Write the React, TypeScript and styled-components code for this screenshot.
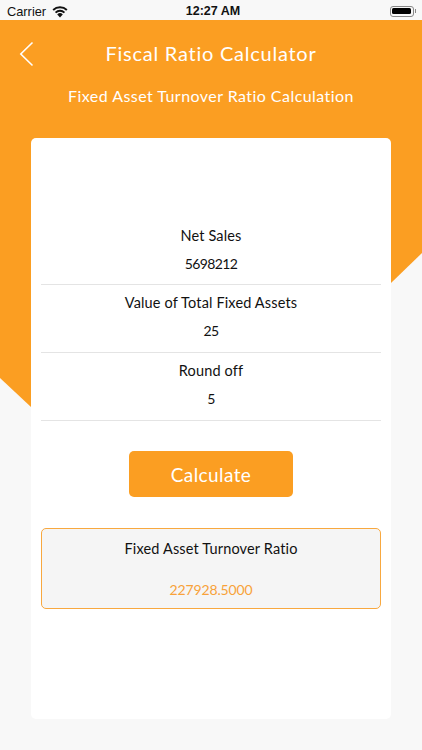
import styled, { createGlobalStyle } from 'styled-components';

const rows = [
  { label: 'Net Sales', value: '5698212' },
  { label: 'Value of Total Fixed Assets', value: '25' },
  { label: 'Round off', value: '5' },
];

const App = () => {
  return (
    <>
      <GlobalStyle />
      <Screen>
        <StatusBar>
          <StatusLeft>
            Carrier
            <svg width="18" height="13" viewBox="0 0 18 13">
              <path d="M9 12.6 6.2 9.4a4.1 4.1 0 0 1 5.6 0Z" fill="#111" />
              <path d="M3.9 6.9a7.4 7.4 0 0 1 10.2 0l-1.3 1.4a5.5 5.5 0 0 0-7.6 0Z" fill="#111" />
              <path d="M1.5 4.3a10.9 10.9 0 0 1 15 0l-1.3 1.4a9 9 0 0 0-12.4 0Z" fill="#111" />
            </svg>
          </StatusLeft>
          <StatusTime>12:27 AM</StatusTime>
          <Battery>
            <BatteryBody>
              <BatteryFill />
            </BatteryBody>
            <BatteryCap />
          </Battery>
        </StatusBar>
        <Backdrop />
        <Header>
          <BackButton>
            <svg width="15" height="26" viewBox="0 0 15 26">
              <path d="M13.5 1.5 1.8 13l11.7 11.5" fill="none" stroke="#fff" strokeWidth="1.6" />
            </svg>
          </BackButton>
          <Title>Fiscal Ratio Calculator</Title>
        </Header>
        <Subtitle>Fixed Asset Turnover Ratio Calculation</Subtitle>
        <Card>
          {rows.map((row) => (
            <Row key={row.label}>
              <RowLabel>{row.label}</RowLabel>
              <RowValue>{row.value}</RowValue>
            </Row>
          ))}
          <CalculateButton>Calculate</CalculateButton>
          <ResultBox>
            <ResultLabel>Fixed Asset Turnover Ratio</ResultLabel>
            <ResultValue>227928.5000</ResultValue>
          </ResultBox>
        </Card>
      </Screen>
    </>
  );
};

export default App;

const GlobalStyle = createGlobalStyle`
  html, body {
    margin: 0;
    padding: 0;
    background: #f8f8f8;
  }
  * {
    box-sizing: border-box;
  }
`;

const Screen = styled.div`
  position: relative;
  width: 422px;
  height: 750px;
  overflow: hidden;
  background: #f8f8f8;
  font-family: 'Lato', 'Liberation Sans', sans-serif;
  color: #111;
`;

const StatusBar = styled.div`
  position: relative;
  height: 20px;
  padding: 2px 6px 0 7px;
  display: grid;
  grid-template-columns: 1fr auto 1fr;
  align-items: center;
  background: #f8f8f8;
  font-family: 'Liberation Sans', sans-serif;
  z-index: 1;
`;

const StatusLeft = styled.div`
  display: flex;
  align-items: center;
  gap: 5px;
  font-size: 12.8px;
`;

const StatusTime = styled.div`
  margin-left: 3px;
  font-weight: 700;
  font-size: 12.5px;
`;

const Battery = styled.div`
  justify-self: end;
  display: flex;
  align-items: center;
  gap: 1px;
`;

const BatteryBody = styled.div`
  width: 24px;
  height: 11px;
  padding: 1.5px;
  border: 1px solid #888;
  border-radius: 3px;
`;

const BatteryFill = styled.div`
  width: 100%;
  height: 100%;
  background: #000;
  border-radius: 1.5px;
`;

const BatteryCap = styled.div`
  width: 1.5px;
  height: 4px;
  background: #888;
`;

const Backdrop = styled.div`
  position: absolute;
  top: 20px;
  left: 0;
  width: 422px;
  height: 400px;
  background: #fb9e22;
  clip-path: polygon(0 0, 422px 0, 422px 233px, 391px 263px, 31px 387px, 0 358px);
`;

const Header = styled.header`
  position: relative;
  height: 66px;
  display: flex;
  align-items: center;
  justify-content: center;
`;

const BackButton = styled.div`
  position: absolute;
  left: 19px;
  top: 21px;
  line-height: 0;
`;

const Title = styled.h1`
  margin: 0;
  color: #fff;
  font-size: 20px;
  font-weight: 400;
  letter-spacing: 0.75px;
`;

const Subtitle = styled.div`
  position: relative;
  height: 52px;
  color: #fff;
  font-size: 16px;
  font-weight: 400;
  line-height: 20px;
  letter-spacing: 0.45px;
  text-align: center;
`;

const Card = styled.main`
  position: relative;
  width: 360px;
  height: 581px;
  margin-left: 31px;
  padding: 84px 10px 0;
  display: flex;
  flex-direction: column;
  background: #fff;
  border-radius: 5px;
`;

const Row = styled.div`
  height: 68px;
  padding-top: 4px;
  display: flex;
  flex-direction: column;
  align-items: center;
  border-bottom: 1px solid #e4e4e4;
  &:first-child {
    height: 63px;
    padding-top: 0;
  }
`;

const RowLabel = styled.div`
  height: 28px;
  font-size: 14.5px;
  line-height: 27px;
  letter-spacing: 0.15px;
`;

const RowValue = styled.div`
  height: 28px;
  font-size: 14px;
  line-height: 28px;
  letter-spacing: -0.6px;
`;

const CalculateButton = styled.button`
  width: 164px;
  height: 46px;
  margin: 30px auto 31px;
  border: 0;
  border-radius: 5px;
  background: #fb9e22;
  color: #fff;
  font-family: inherit;
  font-size: 19px;
  letter-spacing: 0.4px;
`;

const ResultBox = styled.section`
  height: 81px;
  padding-top: 9px;
  display: flex;
  flex-direction: column;
  align-items: center;
  background: #f5f5f5;
  border: 1px solid #f8a83f;
  border-radius: 5px;
`;

const ResultLabel = styled.div`
  height: 22px;
  font-size: 14.5px;
  line-height: 21px;
  letter-spacing: 0.15px;
`;

const ResultValue = styled.div`
  margin-top: 19px;
  height: 22px;
  color: #f8a23a;
  font-size: 14px;
  line-height: 22px;
  letter-spacing: -0.15px;
`;
